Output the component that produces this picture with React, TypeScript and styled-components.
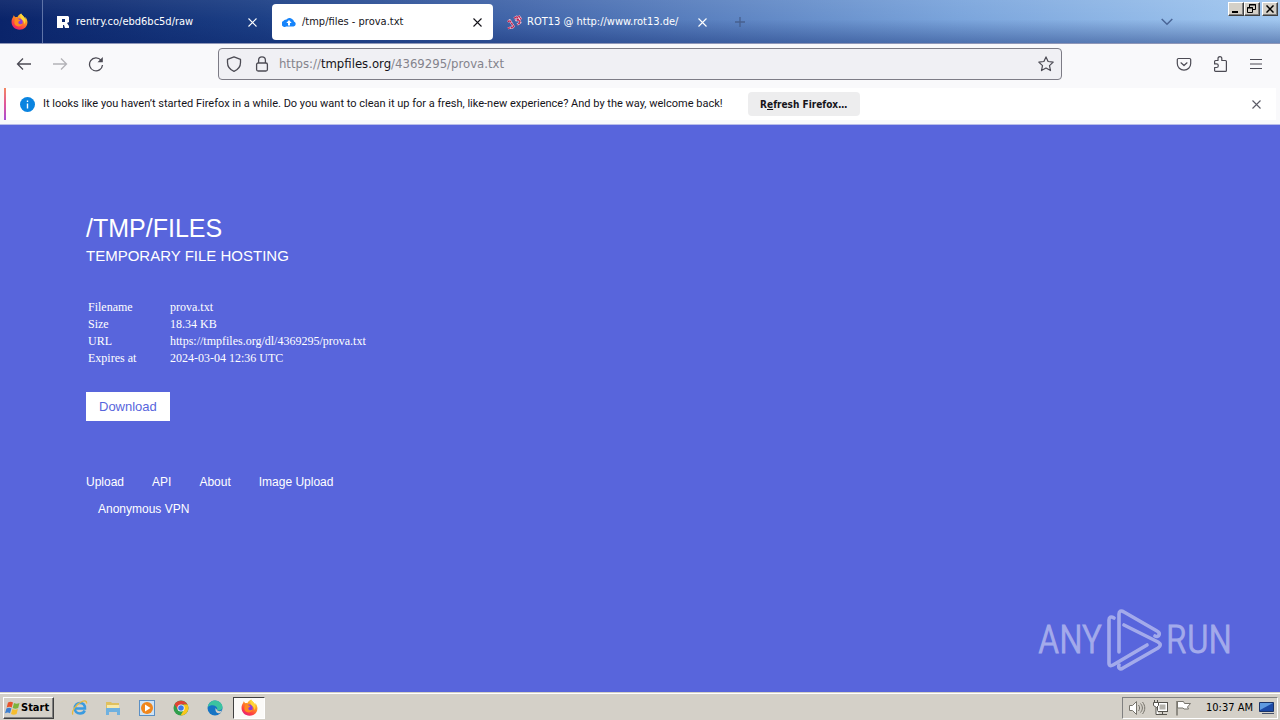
import React from "react";
import styled, { createGlobalStyle, css } from "styled-components";

const UI_FONT = '"DejaVu Sans Condensed", "Noto Sans", sans-serif';

const GlobalStyle = createGlobalStyle`
  *, *::before, *::after { box-sizing: border-box; }
  body { margin: 0; font-family: ${UI_FONT}; font-size: 11px; color: #15141a; }
  button, input { font: inherit; color: inherit; }
  button { cursor: pointer; }
  svg { display: block; flex: none; }
`;

const Desktop = styled.div`
  display: flex;
  flex-direction: column;
  min-height: 100vh;
`;

/* ---------- tab strip ---------- */

const TabStrip = styled.header`
  display: flex;
  height: 44px;
  border-bottom: 1px solid #8f97b8;
  background:
    linear-gradient(to bottom, rgba(255, 255, 255, 0.06), rgba(255, 255, 255, 0) 45%, rgba(10, 36, 106, 0.4)),
    linear-gradient(to right, #0a246a, #1c3f85 20%, #4569ad 42%, #7ba5dc 75%, #a2c8f0);
`;

const FirefoxView = styled.button`
  display: grid;
  place-items: center;
  width: 43px;
  margin-right: 4px;
  padding: 0 4px 0 0;
  border: 0;
  border-right: 1px solid #5f74a8;
  background: none;
`;

const Tabs = styled.div`
  display: flex;
  gap: 4px;
  padding: 4px 0 3px;
`;

const TabItem = styled.div<{ $active?: boolean }>`
  display: flex;
  align-items: center;
  width: 221px;
  padding: 0 8px 0 10px;
  border-radius: 4px;
  color: #fff;
  ${(p) => p.$active && css`background: #fff; color: #15141a;`}
`;

const TabLabel = styled.button`
  display: flex;
  flex: 1;
  align-items: center;
  gap: 4px;
  min-width: 0;
  padding: 0;
  border: 0;
  background: none;
  font-size: 11px;
  line-height: 16px;
  white-space: nowrap;
`;

const IconButton = styled.button<{ $size?: number; $dim?: boolean }>`
  display: grid;
  place-items: center;
  width: ${(p) => p.$size ?? 36}px;
  height: ${(p) => p.$size ?? 32}px;
  padding: 0;
  border: 0;
  background: none;
  opacity: ${(p) => (p.$dim ? 0.4 : 1)};
`;

const NewTab = styled(IconButton)`
  align-self: center;
  margin-left: 4px;
  color: #47608f;
`;

const AllTabs = styled(IconButton)`
  align-self: center;
  margin-left: auto;
  margin-right: 43px;
  color: #4a6596;
`;

const WindowButtons = styled.div`
  display: flex;
  padding: 2px 2px 0 0;
`;

const raised = css`
  border: 1px solid;
  border-color: #fff #404040 #404040 #fff;
  box-shadow: inset -1px -1px 0 #808080;
  background: #d4d0c8;
`;

const WindowButton = styled.button<{ $spaced?: boolean }>`
  ${raised}
  display: grid;
  place-items: center;
  width: 16px;
  height: 14px;
  padding: 0 1px 1px 0;
  margin-left: ${(p) => (p.$spaced ? 2 : 0)}px;
  color: #000;
`;

/* ---------- navigation bar ---------- */

const NavBar = styled.div`
  display: flex;
  align-items: center;
  height: 44px;
  padding: 0 6px 4px;
  background: #f9f9fb;
  color: #4c4b54;
`;

const Spring = styled.div`
  flex: 10;
`;

const AddressBar = styled.form`
  display: flex;
  flex: 81;
  align-items: center;
  height: 32px;
  border: 1px solid #7d7c86;
  border-radius: 4px;
  background: #f0f0f4;
`;

const AddressIcons = styled.div`
  display: flex;
  gap: 12px;
  padding: 0 9px 0 7px;
`;

const Address = styled.div`
  flex: 1;
  color: #84838c;
  font-size: 13px;
  line-height: 20px;

  strong {
    color: #15141a;
    font-weight: 400;
  }
`;

/* ---------- notification ---------- */

const NoticeArea = styled.div`
  padding: 0 4px 4px;
  border-bottom: 1px solid #b9bde9;
  background: #f9f9fb;
`;

const Notice = styled.div`
  display: flex;
  align-items: center;
  min-height: 32px;
  padding: 0 4px 0 14px;
  border-left: 2px solid;
  border-image: linear-gradient(to bottom, #f58b5c, #e0569a 50%, #a44cd8) 1;
  background: #fff;
`;

const NoticeText = styled.p`
  margin: 0 25px 0 8px;
  font-family: Roboto, sans-serif;
  font-size: 11px;
  line-height: 16px;
`;

const NoticeButton = styled.button`
  width: 112px;
  height: 24px;
  padding: 0;
  border: 0;
  border-radius: 4px;
  background: #ededee;
  font-size: 10px;
  font-weight: 700;
`;

const NoticeClose = styled(IconButton)`
  margin-left: auto;
  color: #5b5b66;
`;

/* ---------- web page ---------- */

const Page = styled.main`
  position: relative;
  flex: 1;
  padding: 86px 86px 0;
  background: #5865dc;
  color: #fff;
  font-family: "Liberation Sans", Arial, sans-serif;
`;

const Title = styled.h1`
  margin: 0;
  font-size: 25px;
  font-weight: 400;
  line-height: 34px;
`;

const Subtitle = styled.h2`
  margin: 0 0 33px;
  font-size: 15px;
  font-weight: 400;
  line-height: 21px;
`;

const Details = styled.table`
  border-spacing: 0;
  margin-bottom: 25px;
  font-family: "Liberation Serif", "Times New Roman", serif;
  font-size: 12px;
  line-height: 17px;

  th {
    width: 84px;
    padding: 0 0 0 2px;
    font-weight: 400;
    text-align: left;
  }

  td {
    padding: 0;
  }
`;

const Download = styled.a`
  display: inline-block;
  padding: 0 13px;
  background: #fff;
  color: #5865dc;
  font-size: 13px;
  line-height: 29px;
  text-decoration: none;
`;

const Links = styled.nav`
  display: flex;
  flex-wrap: wrap;
  column-gap: 28px;
  width: 280px;
  margin-top: 48px;
`;

const PageLink = styled.a<{ $indent?: boolean }>`
  margin-left: ${(p) => (p.$indent ? 12 : 0)}px;
  color: #fff;
  font-size: 12px;
  line-height: 27px;
  text-decoration: none;
`;

const Watermark = styled.div`
  position: absolute;
  right: 48px;
  bottom: 20px;
  display: flex;
  align-items: center;
  gap: 2px;
  color: #fff;
  font-family: "Roboto Condensed", "Open Sans Condensed", "Liberation Sans Narrow", sans-serif;
  font-size: 38px;
  font-weight: 300;
  line-height: 64px;
  -webkit-text-stroke: 1px #fff;
  opacity: 0.45;
`;

/* ---------- taskbar ---------- */

const Taskbar = styled.footer`
  display: flex;
  align-items: center;
  height: 28px;
  padding: 2px 2px 0 3px;
  border-top: 1px solid #d4d0c8;
  box-shadow: inset 0 1px 0 #fff;
  background: #d4d0c8;
  color: #000;
`;

const StartButton = styled.button`
  ${raised}
  display: flex;
  align-items: center;
  width: 51px;
  height: 22px;
  padding: 0;
  margin-right: 8px;
  font-size: 11px;
  font-weight: 700;
`;

const TaskButton = styled.button<{ $pressed?: boolean }>`
  display: grid;
  place-items: center;
  width: 32px;
  height: 22px;
  margin: 0 1px;
  padding: 0;
  border: 0;
  background: none;
  ${(p) =>
    p.$pressed &&
    css`
      border: 1px solid;
      border-color: #404040 #fff #fff #404040;
      background: #fbfaf8;
    `}
`;

const Tray = styled.div`
  display: flex;
  align-items: center;
  gap: 6px;
  height: 22px;
  margin-left: auto;
  padding: 0 2px 0 5px;
  border: 1px solid;
  border-color: #808080 #fff #fff #808080;
`;

const Clock = styled.time`
  padding: 0 0 0 8px;
  font-size: 11px;
  line-height: 16px;
`;

/* ---------- icons ---------- */

const Cross = ({ size = 9, width = 1.1 }: { size?: number; width?: number }) => (
  <svg width={size} height={size} viewBox="0 0 9 9" stroke="currentColor" strokeWidth={width} fill="none">
    <path d="M.5.5l8 8M8.5.5l-8 8" />
  </svg>
);

const FirefoxIcon = ({ id }: { id: string }) => (
  <svg width="17" height="17" viewBox="0 0 32 32">
    <defs>
      <linearGradient id={id} x1=".8" y1="0" x2=".2" y2="1">
        <stop offset="0" stopColor="#fff04a" />
        <stop offset=".35" stopColor="#ff9a1f" />
        <stop offset=".7" stopColor="#ff4540" />
        <stop offset="1" stopColor="#e3177f" />
      </linearGradient>
    </defs>
    <path fill={`url(#${id})`} d="M19 1c1 3 4 4 6 7 1 1 1 2 1.500 3 1-1 .5-3 0-4 3 3 4.500 7 4.500 10.500C31 26 24.500 31.500 16 31.500S1 25 1 17c0-4 1-7 3-9.500L5 4l3 4c1-.5 3-.5 4 0 1.500-3 4-5.500 7-7z" />
    <circle cx="15.500" cy="17" r="6.500" fill="#8a3be0" />
    <path fill="#ff8a1f" d="M8 11c3-2 5 0 7 1 1 1 3 1 3 2s-4 1-4 3c-1 2 1 4 3 4 2 0 3-1 5-1-2 4-6 6-10 5-6-1-7-7-4-14z" />
    <path fill="#ffd93a" d="M19 1c1 3 4 4 6 7 3 5 3 9 0 13 0-5-2-7-5-9-3-3-3-7-1-11z" opacity=".9" />
  </svg>
);

const RentryIcon = () => (
  <svg width="15" height="16" viewBox="0 0 15 16">
    <path fill="#fff" fillRule="evenodd" d="M0 2h11l1 1v5l-2 1 2 3v2H8l-1-3H6v3H0zM5 5v3h3V5z" />
  </svg>
);

const CloudIcon = () => (
  <svg width="16" height="16" viewBox="0 0 16 16">
    <path fill="#1684fb" d="M5 13a3 3 0 0 1-3-5.200A4 4 0 0 1 5.500 6a3.800 3.800 0 0 1 5.500-.5A3.500 3.500 0 0 1 13 8a2.600 2.600 0 0 1-.5 5z" transform="translate(-1 -.5)" />
    <path fill="#fff" d="M7 6l2.700 3H8v2.500H6V9H4.300z" />
  </svg>
);

const Rot13Icon = () => (
  <svg width="16" height="16" viewBox="0 0 18 16" fill="none" strokeLinejoin="round">
    <g stroke="#e6cfe0" strokeWidth="2.600">
      <path d="M1 8l2-2 5 8M1 15l6-1M8 4l3-2 1.500 3-2 1 3-.5 1.500 3-3.500 2.500M13 1l3 4" />
    </g>
    <g stroke="#c02450" strokeWidth="1.600" strokeDasharray="2.500 .7">
      <path d="M1 8l2-2 5 8M1 15l6-1M8 4l3-2 1.500 3-2 1 3-.5 1.500 3-3.500 2.500M13 1l3 4" />
    </g>
  </svg>
);

const ArrowIcon = ({ forward }: { forward?: boolean }) => (
  <svg width="16" height="16" viewBox="0 0 16 16" fill="none" stroke="currentColor" strokeWidth="1.300">
    <path d={forward ? "M1 8h13.500M9 2.500L14.500 8 9 13.500" : "M15 8H1.500M7 2.500L1.500 8 7 13.500"} />
  </svg>
);

const ReloadIcon = () => (
  <svg width="16" height="16" viewBox="0 0 16 16" fill="none" stroke="currentColor" strokeWidth="1.300">
    <path d="M13 4.200A6.500 6.500 0 1 0 14.500 9" />
    <path d="M14.800 1v5.300H9.500z" fill="currentColor" stroke="none" />
  </svg>
);

const ShieldIcon = () => (
  <svg width="16" height="16" viewBox="0 0 16 16" fill="none" stroke="currentColor" strokeWidth="1.300" strokeLinejoin="round">
    <path d="M8 .8l6.500 2.600v3.200c0 4-2.500 7.200-6.500 8.800-4-1.600-6.500-4.800-6.500-8.800V3.400z" />
  </svg>
);

const LockIcon = () => (
  <svg width="16" height="16" viewBox="0 0 16 16" fill="none" stroke="currentColor" strokeWidth="1.300">
    <rect x="2.600" y="7" width="10.800" height="8" rx="1.500" />
    <path d="M4.600 7V4.200a3.400 3.400 0 0 1 6.800 0V7" />
  </svg>
);

const StarIcon = () => (
  <svg width="16" height="16" viewBox="0 0 16 16" fill="none" stroke="currentColor" strokeWidth="1.200" strokeLinejoin="round">
    <path d="M8 .9l2.100 4.600 5.100.6-3.700 3.500 1 5L8 12.100l-4.500 2.500 1-5L.8 6.100l5.100-.6z" />
  </svg>
);

const PocketIcon = () => (
  <svg width="16" height="16" viewBox="0 0 16 16" fill="none" stroke="currentColor" strokeWidth="1.200" strokeLinecap="round" strokeLinejoin="round">
    <path d="M2.500 2.500h11a1.200 1.200 0 0 1 1.200 1.200V7.500a6.700 6.700 0 0 1-13.400 0V3.700a1.200 1.200 0 0 1 1.200-1.200z" />
    <path d="M5 6.800l3 2.700 3-2.700" />
  </svg>
);

const PuzzleIcon = () => (
  <svg width="16" height="16" viewBox="0 0 16 16" fill="none" stroke="currentColor" strokeWidth="1.200" strokeLinejoin="round">
    <path d="M6 4.500V2.600a1.900 1.900 0 0 1 3.800 0v1.900h3.700c.5 0 .9.400.9.900v9c0 .5-.4.900-.9.900h-10c-.5 0-.9-.4-.9-.9V11.500h1.900a1.800 1.800 0 0 0 0-3.600H2.600V5.400c0-.5.400-.9.900-.9z" />
  </svg>
);

const MenuIcon = () => (
  <svg width="14" height="14" viewBox="0 0 14 14" stroke="currentColor" strokeWidth="1.200">
    <path d="M1 2.500h12M1 7h12M1 11.500h12" />
  </svg>
);

const InfoIcon = () => (
  <svg width="15" height="15" viewBox="0 0 15 15">
    <circle cx="7.500" cy="7.500" r="7.500" fill="#0a84e0" />
    <path d="M7.500 6.500v5M7.500 3.500v1.500" stroke="#fff" strokeWidth="1.400" />
  </svg>
);

const PlayMark = () => (
  <svg width="60" height="64" viewBox="0 0 60 64" fill="none" stroke="#fff" strokeWidth="3.600" strokeLinejoin="round" strokeLinecap="round">
    <path d="M10 10C7 8 5 9 5 12v43c0 3 2 3 4 2l34-20" />
    <path d="M15 44V6c0-3 2-4 5-2l33 19c4 2 2 7-2 5" />
    <path d="M20 17l34 17c3 2 3 4 0 6L19 60c-3 2-5 0-4-3" />
  </svg>
);

const WindowsFlag = () => (
  <svg width="17" height="16" viewBox="0 0 17 16">
    <path fill="#e8532a" d="M4 2.500c2-1 3.500-1 5 0L7.700 7.400c-1.500-1-3.200-1-5 0z" />
    <path fill="#7db33c" d="M10 3c1.800 1 3.500 1 5.500 0l-1.300 5c-2 1-3.700 1-5.500 0z" />
    <path fill="#3d7fd0" d="M2.400 8.400c1.900-1 3.500-1 5 0L6 13.300c-1.500-1-3-1-5 0z" />
    <path fill="#f6bd2e" d="M8.400 9c1.800 1 3.500 1 5.500 0l-1.300 5c-2 1-3.800 1-5.600 0z" />
  </svg>
);

const ExplorerIcon = () => (
  <svg width="17" height="17" viewBox="0 0 17 17" fill="none">
    <path d="M4 9.500h10c0-3.500-2-5.500-5-5.500s-5.200 2-5.200 5.200S6 14.500 9 14.500c2.200 0 4-1 4.700-3" stroke="#3a9be0" strokeWidth="2.500" />
    <path d="M2 15.500C0 13 5 5 11 2.500c3-1.300 5-.5 4.500 2" stroke="#e9b93c" strokeWidth="1.300" />
  </svg>
);

const FolderIcon = () => (
  <svg width="16" height="16" viewBox="0 0 16 16">
    <path fill="#dfc05f" d="M1 2h5l1 1h7v9H1z" />
    <path fill="#f8e9a8" d="M2 5h12v4H2z" />
    <path fill="#6fb1e0" d="M1 8h14v7h-3v-3H4v3H1z" />
  </svg>
);

const MediaIcon = () => (
  <svg width="16" height="16" viewBox="0 0 16 16">
    <rect x=".5" y=".5" width="15" height="15" fill="#cfe3f5" stroke="#5b8fc4" />
    <circle cx="8" cy="8" r="6" fill="#f0861c" />
    <path fill="#fff" d="M6 4.500l5.500 3.500L6 11.500z" />
  </svg>
);

const ChromeIcon = () => (
  <svg width="16" height="16" viewBox="0 0 16 16">
    <circle cx="8" cy="8" r="7.500" fill="#2f9e4b" />
    <path fill="#e04234" d="M1.500 4.300A7.500 7.500 0 0 1 14.500 4.500H8L4.900 9.800z" />
    <path fill="#fbc61b" d="M14.500 4.500A7.500 7.500 0 0 1 7.500 15.500l3.500-5.800-.500-5.200z" />
    <circle cx="8" cy="8" r="3.600" fill="#fff" />
    <circle cx="8" cy="8" r="2.800" fill="#3b78e7" />
  </svg>
);

const EdgeIcon = () => (
  <svg width="16" height="16" viewBox="0 0 16 16">
    <circle cx="8" cy="8" r="7.500" fill="#1674c4" />
    <path fill="#3cc3a0" d="M.7 7C2 2 5 .500 8 .500c4 0 7.500 3 7.500 6.500 0 2-1.500 3.500-4 3.500-2 0-1.500-1-1.200-2C10 5.500 4.500 3.500.7 7z" />
    <path fill="#d4d0c8" d="M9.700 9.500c1 2.200 4 2 5.300.8-.3 1.200-1 2-2 3C10 13.500 8 12 8.500 8z" />
  </svg>
);

const SpeakerIcon = () => (
  <svg width="18" height="16" viewBox="0 0 18 16" fill="none" stroke="#77746c">
    <path fill="#fff" d="M1.500 5.500h3l4-4v13l-4-4h-3z" />
    <path d="M10.500 5c1.500 2 1.500 4 0 6M12.500 3.500c2.500 3 2.500 6 0 9M14.500 2c3 4 3 8 0 12" />
  </svg>
);

const NetworkIcon = () => (
  <svg width="17" height="16" viewBox="0 0 17 16" fill="none" stroke="#55534d">
    <rect x="5.500" y="2.500" width="10" height="9" fill="#fff" />
    <rect x="7.500" y="4.500" width="6" height="5" fill="#b4b2ac" stroke="none" />
    <path d="M6 14.500h9M10.500 11.500v3" />
    <path fill="#fff" d="M1.500 2.500h5v3l-2 2-3-2zM2.500 0v2.500M5.500 0v2.500M4 7.500v7h3" />
  </svg>
);

const FlagIcon = () => (
  <svg width="17" height="16" viewBox="0 0 17 16" stroke="#77746c">
    <path fill="#fff" d="M2.500 1.500h6l1 2h6l-3 3.500 1 2H9l-1-1H2.500z" />
    <path d="M2 1v14.500" strokeWidth="1.500" />
  </svg>
);

const DesktopIcon = () => (
  <svg width="16" height="14" viewBox="0 0 16 14">
    <path fill="#1c4aa6" stroke="#1a3468" d="M.5 1.500h14v9H.5z" />
    <path fill="#5f9ae0" d="M1 2h13L1 9z" />
    <path fill="#47536b" d="M3 12h12v1H3z" />
  </svg>
);

/* ---------- app ---------- */

const tabs = [
  { title: "rentry.co/ebd6bc5d/raw", icon: <RentryIcon /> },
  { title: "/tmp/files - prova.txt", icon: <CloudIcon />, active: true },
  { title: "ROT13 @ http://www.rot13.de/", icon: <Rot13Icon /> },
];

const details = [
  ["Filename", "prova.txt"],
  ["Size", "18.34 KB"],
  ["URL", "https://tmpfiles.org/dl/4369295/prova.txt"],
  ["Expires at", "2024-03-04 12:36 UTC"],
];

const links = ["Upload", "API", "About", "Image Upload", "Anonymous VPN"];

const pinned = [
  { name: "Internet Explorer", icon: <ExplorerIcon /> },
  { name: "Windows Explorer", icon: <FolderIcon /> },
  { name: "Media Player", icon: <MediaIcon /> },
  { name: "Chrome", icon: <ChromeIcon /> },
  { name: "Edge", icon: <EdgeIcon /> },
  { name: "Firefox", icon: <FirefoxIcon id="ff-task" />, pressed: true },
];

export default function App() {
  return (
    <Desktop>
      <GlobalStyle />
      <TabStrip>
        <FirefoxView aria-label="Firefox View"><FirefoxIcon id="ff-view" /></FirefoxView>
        <Tabs>
          {tabs.map((t) => (
            <TabItem key={t.title} $active={t.active}>
              <TabLabel>{t.icon}{t.title}</TabLabel>
              <IconButton $size={16} aria-label="Close tab"><Cross /></IconButton>
            </TabItem>
          ))}
        </Tabs>
        <NewTab aria-label="New tab">
          <svg width="12" height="12" viewBox="0 0 12 12" stroke="currentColor" strokeWidth="1.300"><path d="M6 1v10M1 6h10" /></svg>
        </NewTab>
        <AllTabs aria-label="List all tabs">
          <svg width="12" height="8" viewBox="0 0 12 8" fill="none" stroke="currentColor" strokeWidth="1.500"><path d="M.7 1L6 6.300 11.300 1" /></svg>
        </AllTabs>
        <WindowButtons>
          <WindowButton aria-label="Minimize">
            <svg width="9" height="9" viewBox="0 0 9 9"><path d="M1 7h6v2H1z" /></svg>
          </WindowButton>
          <WindowButton aria-label="Restore">
            <svg width="9" height="9" viewBox="0 0 9 9" fill="none" stroke="#000"><path d="M2.500 3V.5h6v5H6M.5 3.500h5v5h-5zM2 1h7M0 4h6" /></svg>
          </WindowButton>
          <WindowButton $spaced aria-label="Close"><Cross size={8} width={1.7} /></WindowButton>
        </WindowButtons>
      </TabStrip>

      <NavBar>
        <IconButton aria-label="Back"><ArrowIcon /></IconButton>
        <IconButton $dim aria-label="Forward"><ArrowIcon forward /></IconButton>
        <IconButton aria-label="Reload"><ReloadIcon /></IconButton>
        <Spring />
        <AddressBar>
          <AddressIcons><ShieldIcon /><LockIcon /></AddressIcons>
          <Address>https://<strong>tmpfiles.org</strong>/4369295/prova.txt</Address>
          <IconButton type="button" $size={30} aria-label="Bookmark"><StarIcon /></IconButton>
        </AddressBar>
        <Spring />
        <IconButton aria-label="Pocket"><PocketIcon /></IconButton>
        <IconButton aria-label="Extensions"><PuzzleIcon /></IconButton>
        <IconButton aria-label="Menu"><MenuIcon /></IconButton>
      </NavBar>

      <NoticeArea>
        <Notice>
          <InfoIcon />
          <NoticeText>
            It looks like you haven’t started Firefox in a while. Do you want to clean it up for a fresh, like-new experience? And by the way, welcome back!
          </NoticeText>
          <NoticeButton>R<u>e</u>fresh Firefox…</NoticeButton>
          <NoticeClose $size={32} aria-label="Dismiss"><Cross /></NoticeClose>
        </Notice>
      </NoticeArea>

      <Page>
        <Title>/TMP/FILES</Title>
        <Subtitle>TEMPORARY FILE HOSTING</Subtitle>
        <Details>
          <tbody>
            {details.map(([name, value]) => (
              <tr key={name}><th scope="row">{name}</th><td>{value}</td></tr>
            ))}
          </tbody>
        </Details>
        <Download href="#download">Download</Download>
        <Links>
          {links.map((l) => (
            <PageLink key={l} href="#" $indent={l === "Anonymous VPN"}>{l}</PageLink>
          ))}
        </Links>
        <Watermark><span>ANY</span><PlayMark /><span>RUN</span></Watermark>
      </Page>

      <Taskbar>
        <StartButton><WindowsFlag />Start</StartButton>
        {pinned.map((p) => (
          <TaskButton key={p.name} aria-label={p.name} $pressed={p.pressed}>{p.icon}</TaskButton>
        ))}
        <Tray>
          <SpeakerIcon />
          <NetworkIcon />
          <FlagIcon />
          <Clock>10:37 AM</Clock>
          <DesktopIcon />
        </Tray>
      </Taskbar>
    </Desktop>
  );
}
